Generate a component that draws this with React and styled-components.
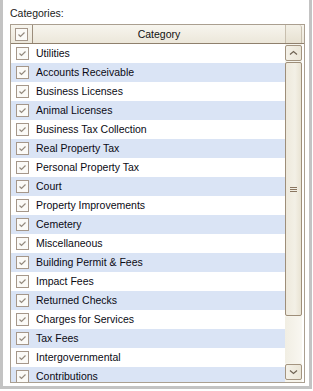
import styled, { createGlobalStyle } from "styled-components";

const categories = [
  "Utilities",
  "Accounts Receivable",
  "Business Licenses",
  "Animal Licenses",
  "Business Tax Collection",
  "Real Property Tax",
  "Personal Property Tax",
  "Court",
  "Property Improvements",
  "Cemetery",
  "Miscellaneous",
  "Building Permit & Fees",
  "Impact Fees",
  "Returned Checks",
  "Charges for Services",
  "Tax Fees",
  "Intergovernmental",
  "Contributions",
];

const Global = createGlobalStyle`
  html, body {
    margin: 0;
    padding: 0;
    background: #ffffff;
  }
  body {
    font-family: "Liberation Sans", Arial, sans-serif;
    font-size: 10.5px;
    color: #000;
  }
`;

function CheckBox() {
  return (
    <Box>
      <svg width="9" height="9" viewBox="0 0 9 9">
        <path d="M1.5 4.5 L3.5 6.5 L7.5 2.5" fill="none" stroke="#948a7e" strokeWidth="1.2" />
      </svg>
    </Box>
  );
}

function Arrow({ down }) {
  return (
    <svg width="9" height="6" viewBox="0 0 9 6">
      <path
        d={down ? "M1 1.5 L4.5 4.5 L8 1.5" : "M1 4.5 L4.5 1.5 L8 4.5"}
        fill="none"
        stroke="#6f6353"
        strokeWidth="1.2"
      />
    </svg>
  );
}

export default function App() {
  return (
    <>
      <Global />
      <Frame>
        <Label>Categories:</Label>
        <Grid>
          <HeaderRow>
            <CheckHead>
              <CheckBox />
            </CheckHead>
            <TitleHead>Category</TitleHead>
            <CornerHead />
          </HeaderRow>
          <Body>
            <Rows>
              {categories.map((name, i) => (
                <Row key={name} $alt={i % 2 === 1}>
                  <CheckCell>
                    <CheckBox />
                  </CheckCell>
                  <NameCell>{name}</NameCell>
                </Row>
              ))}
            </Rows>
            <ScrollBar>
              <ScrollButton>
                <Arrow />
              </ScrollButton>
              <Thumb>
                <Grip>
                  <span />
                  <span />
                  <span />
                </Grip>
              </Thumb>
              <Track />
              <ScrollButton>
                <Arrow down />
              </ScrollButton>
            </ScrollBar>
          </Body>
        </Grid>
      </Frame>
    </>
  );
}

const Frame = styled.div`
  box-sizing: border-box;
  width: 312px;
  height: 389px;
  border: 3px solid #c3c3c3;
  border-top: none;
  background: #ffffff;
  padding: 4px 4px 3px 7px;
  display: flex;
  flex-direction: column;
`;

const Label = styled.div`
  height: 20px;
  line-height: 18px;
  color: #1a1a1a;
`;

const Grid = styled.div`
  flex: 1;
  display: flex;
  flex-direction: column;
  border: 1px solid #aa9f90;
  min-height: 0;
`;

const HeaderRow = styled.div`
  display: flex;
  height: 18px;
  border-bottom: 1px solid #8f806d;
  background: linear-gradient(#f7f5ee, #ece7da);
`;

const CheckHead = styled.div`
  width: 21px;
  display: flex;
  align-items: center;
  justify-content: center;
  border-right: 1px solid #9b8d7b;
`;

const TitleHead = styled.div`
  flex: 1;
  text-align: center;
  line-height: 18px;
  color: #111;
`;

const CornerHead = styled.div`
  box-sizing: border-box;
  width: 17px;
  margin-right: 2px;
  border-left: 1px solid #c8bfae;
  border-right: 1px solid #c8bfae;
  border-top-right-radius: 3px;
  background: linear-gradient(#f3f0e6, #e7e1d1);
`;

const Body = styled.div`
  flex: 1;
  display: flex;
  min-height: 0;
`;

const Rows = styled.div`
  flex: 1;
  overflow: hidden;
`;

const Row = styled.div`
  display: flex;
  height: 19px;
  align-items: center;
  background: ${({ $alt }) => ($alt ? "#dae4f5" : "#ffffff")};
`;

const CheckCell = styled.div`
  width: 22px;
  display: flex;
  justify-content: center;
`;

const NameCell = styled.div`
  padding-left: 3px;
  line-height: 17px;
  color: #0a0a14;
  white-space: nowrap;
`;

const Box = styled.div`
  box-sizing: border-box;
  width: 13px;
  height: 13px;
  border: 1px solid #a5978a;
  background: #fbfaf7;
  display: flex;
  align-items: center;
  justify-content: center;
`;

const ScrollBar = styled.div`
  width: 17px;
  margin-right: 2px;
  display: flex;
  flex-direction: column;
  gap: 1px;
  padding-top: 1px;
  padding-bottom: 2px;
  background: #f6f4ec;
`;

const ScrollButton = styled.div`
  box-sizing: border-box;
  height: 16px;
  border: 1px solid #a39480;
  border-radius: 2px;
  background: linear-gradient(90deg, #f4f1e8, #ebe6d7);
  display: flex;
  align-items: center;
  justify-content: center;
`;

const Thumb = styled.div`
  box-sizing: border-box;
  height: 254px;
  border: 1px solid #9e8e79;
  border-radius: 2px;
  background: linear-gradient(90deg, #eee9dc, #f3f0e6 60%, #e9e3d3);
  display: flex;
  align-items: center;
  justify-content: center;
`;

const Grip = styled.div`
  display: flex;
  flex-direction: column;
  gap: 1px;
  span {
    display: block;
    width: 7px;
    height: 1px;
    background: #8a7660;
  }
`;

const Track = styled.div`
  flex: 1;
  background: linear-gradient(90deg, #f1eee3, #f9f7f1);
`;
